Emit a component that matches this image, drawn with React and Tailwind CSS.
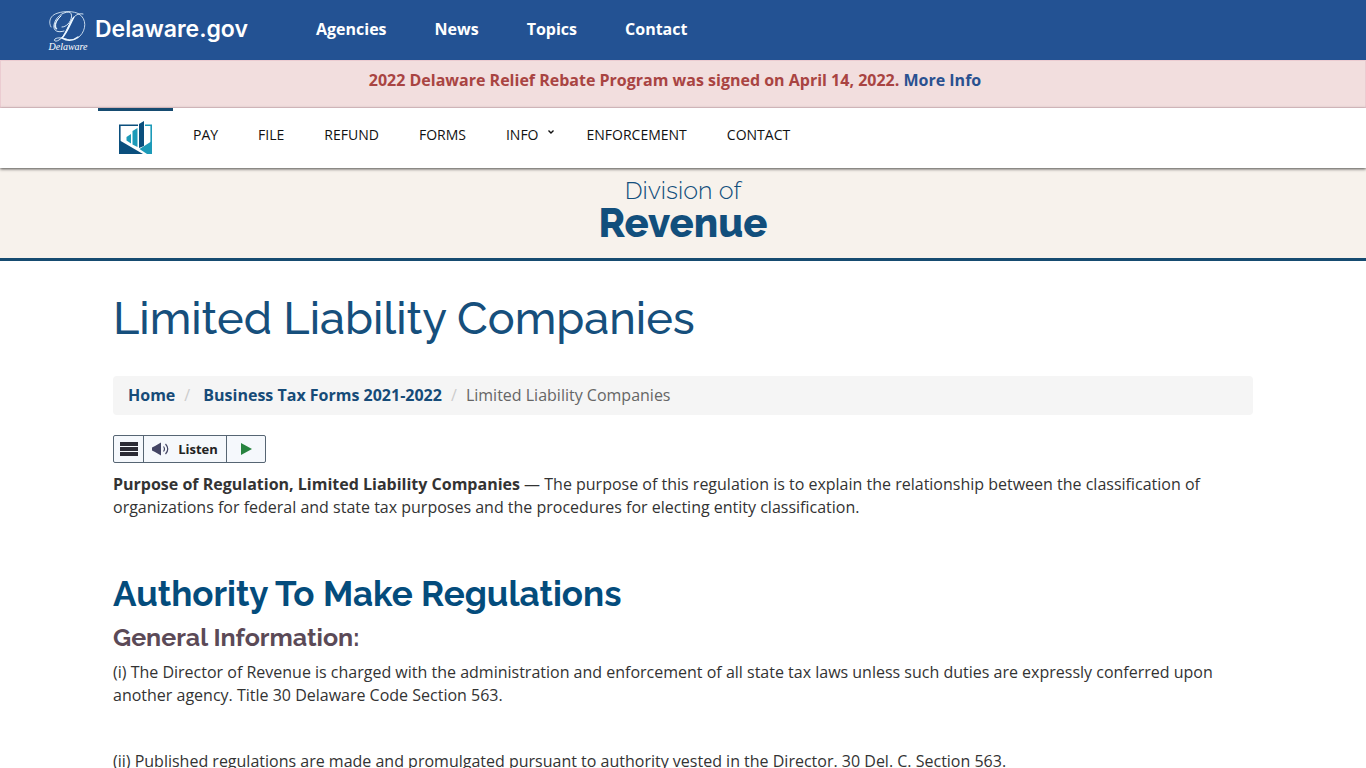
const topLinks = ['Agencies', 'News', 'Topics', 'Contact'];

const navLinks = [
  { label: 'PAY' },
  { label: 'FILE' },
  { label: 'REFUND' },
  { label: 'FORMS' },
  { label: 'INFO', hasMenu: true },
  { label: 'ENFORCEMENT' },
  { label: 'CONTACT' },
];

// Script D with the big loop behind it
const ScriptD = () => (
  <svg viewBox="0 0 38 32" fill="none" stroke="#eaf6ff" strokeLinecap="round" className="h-8 w-[38px]" aria-hidden="true">
    <path d="M2 16C-1 11 1 4 9 2C15 0 25 0 30 3C38 8 37 19 31 25C27 29 22 30 17 28" strokeWidth="0.8" />
    <path d="M17 28C13 27 9 26 6 28C4 30 7 31 10 29C16 26 19 14 25 6C27 4 30 2 34 3" strokeWidth="0.9" />
    <path d="M25 6C21 10 18 21 13 27C17 24 21 14 25 6Z" fill="#eaf6ff" strokeWidth="1.2" />
    <path d="M15 20C9 22 4 20 5 14C6 7 13 1 20 1C24 2 23 9 19 13C17 15 15 16 13 16" strokeWidth="0.9" />
    <path d="M12 5C7 9 5 15 8 18C5 18 4 12 12 5Z" fill="#eaf6ff" strokeWidth="1" />
    <path d="M13 27C18 30 24 30 29 26" strokeWidth="1.6" />
  </svg>
);

// Bar chart inside a frame
const RevenueIcon = () => (
  <svg viewBox="0 0 33 33" className="h-[33px] w-[33px]" aria-hidden="true">
    <path d="M19 4.2H0.800V22" fill="none" stroke="#0b4f7d" strokeWidth="1.6" />
    <path d="M26 4.2H32.200V22" fill="none" stroke="#1c9ab8" strokeWidth="1.6" />
    <path d="M7.500 16L12 13V22.500L7.500 19.500Z" fill="#1c9ab8" />
    <path d="M13.500 10L18.500 7V26L13.500 23.500Z" fill="#1c9ab8" />
    <path d="M20 3L25 0V25L20 27Z" fill="#0b4f7d" />
    <path d="M0 19L24 33H0Z" fill="#0b4f7d" />
    <path d="M33 20V33H28L20.500 28Z" fill="#1c9ab8" />
  </svg>
);

const SpeakerIcon = () => (
  <svg viewBox="0 0 18 14" className="h-[14px] w-[18px]" aria-hidden="true">
    <path d="M0 5.500L3 4L9 0.500V13.500L3 10L0 8.500Z" fill="#434564" />
    <path d="M11.500 4.500Q13.500 7 11.500 9.500M13.500 2Q18 7 13.500 12" fill="none" stroke="#434564" strokeWidth="1.2" />
  </svg>
);

const TopBar = () => (
  <header className="flex h-[60px] items-center gap-8 bg-[#235293] pb-0.5 pl-[49px] text-white">
    <a href="#" className="flex w-[235px] items-center gap-2">
      <span className="flex w-[38px] flex-col items-center pt-1">
        <ScriptD />
        <span className="font-['Liberation_Serif',serif] text-[10px] italic leading-[8px]">Delaware</span>
      </span>
      <span className="font-['Inter',sans-serif] text-[23px] font-semibold leading-8">Delaware.gov</span>
    </a>
    <nav className="flex gap-12 font-bold">
      {topLinks.map(label => (
        <a key={label} href="#">{label}</a>
      ))}
    </nav>
  </header>
);

const MainNav = () => (
  <nav className="relative bg-white shadow-[0_1px_3px_rgba(0,0,0,0.7)]">
    <div className="mx-auto flex h-[60px] max-w-[1170px] text-sm text-[#111]">
      <a href="#" aria-label="Division of Revenue home" className="flex w-[75px] justify-center border-t-[3px] border-[#164b70] pt-[10px]">
        <RevenueIcon />
      </a>
      {navLinks.map(({ label, hasMenu }) => (
        <a key={label} href="#" className="flex gap-2 px-5 pt-4 leading-[22px]">
          {label}
          {hasMenu && (
            <svg viewBox="0 0 8 6" fill="none" stroke="currentColor" strokeWidth="1.4" className="-mr-2 mt-[5px] h-[6px] w-2">
              <path d="M1.500 1.500L4 4L6.500 1.500" />
            </svg>
          )}
        </a>
      ))}
    </div>
  </nav>
);

const Breadcrumb = () => (
  <nav aria-label="Breadcrumb" className="mt-[30px] rounded bg-[#f5f5f5] px-[15px] py-2">
    <ol className="flex text-[#666]">
      <li><a href="#" className="font-bold text-[#164b78]">Home</a></li>
      <li className="w-7 pl-[9px] text-[#ccc]" aria-hidden="true">/</li>
      <li><a href="#" className="font-bold text-[#164b78]">Business Tax Forms 2021-2022</a></li>
      <li className="w-6 pl-[9px] text-[#ccc]" aria-hidden="true">/</li>
      <li>Limited Liability Companies</li>
    </ol>
  </nav>
);

const ListenBar = () => (
  <div className="mt-5 flex h-7 w-[153px] divide-x divide-[#566573] overflow-hidden rounded-xs border border-[#566573] bg-[#f5f8fc]">
    <button type="button" aria-label="Menu" className="flex w-[30px] items-center justify-center">
      <svg viewBox="0 0 18 14" fill="#2b2b35" className="h-[14px] w-[18px]">
        <path d="M0 0H18V4H0ZM0 5H18V9H0ZM0 10H18V14H0Z" />
      </svg>
    </button>
    <button type="button" className="flex flex-1 items-center justify-center gap-2 text-[13px] font-bold leading-5 text-[#222]">
      <SpeakerIcon />
      Listen
    </button>
    <button type="button" aria-label="Play" className="flex w-[38px] items-center justify-center">
      <svg viewBox="0 0 11 12" fill="#27833f" className="h-3 w-[11px]">
        <path d="M0 0L11 6L0 12Z" />
      </svg>
    </button>
  </div>
);

const App = () => {
  return (
    <div className="min-h-screen bg-white font-['Open_Sans',sans-serif] text-base leading-[23px] text-[#333]">
      <TopBar />

      <div className="h-12 border border-[#ebccd1] bg-[#f2dede] pr-4 pt-2 text-center font-bold text-[#a94442]">
        2022 Delaware Relief Rebate Program was signed on April 14, 2022.{' '}
        <a href="#" className="text-[#2a5190]">More Info</a>
      </div>

      <MainNav />

      {/* Division title */}
      <div className="h-[93px] border-b-[3px] border-[#164b70] bg-[#f7f2ec] pt-2 text-center font-['Raleway','Lato',sans-serif] text-[#124f7c]">
        <p className="text-[25px] font-light leading-7">Division of</p>
        <p className="text-[40px] font-extrabold leading-[38px]">Revenue</p>
      </div>

      <main className="mx-auto max-w-[1170px] px-[15px] pb-8">
        <h1 className="mt-[30px] font-['Raleway','Lato',sans-serif] text-[45px] font-medium leading-[55px] text-[#164f7c]">
          Limited Liability Companies
        </h1>

        <Breadcrumb />
        <ListenBar />

        <p className="mt-[10px]">
          <strong>Purpose of Regulation, Limited Liability Companies</strong> — The purpose of this regulation is to
          explain the relationship between the classification of organizations for federal and state tax purposes and
          the procedures for electing entity classification.
        </p>

        <h2 className="mt-[55px] font-['Raleway','Lato',sans-serif] text-[35px] font-bold leading-10 text-[#044c7c]">
          Authority To Make Regulations
        </h2>
        <h3 className="mt-[7px] font-['Raleway','Lato',sans-serif] text-[25px] font-bold leading-8 text-[#5b4a57]">
          General Information:
        </h3>

        <p className="mt-2">
          (i) The Director of Revenue is charged with the administration and enforcement of all state tax laws unless
          such duties are expressly conferred upon another agency. Title 30 Delaware Code Section 563.
        </p>
        <p className="mt-[43px]">
          (ii) Published regulations are made and promulgated pursuant to authority vested in the Director. 30 Del. C.
          Section 563.
        </p>
      </main>
    </div>
  );
};

export default App;
